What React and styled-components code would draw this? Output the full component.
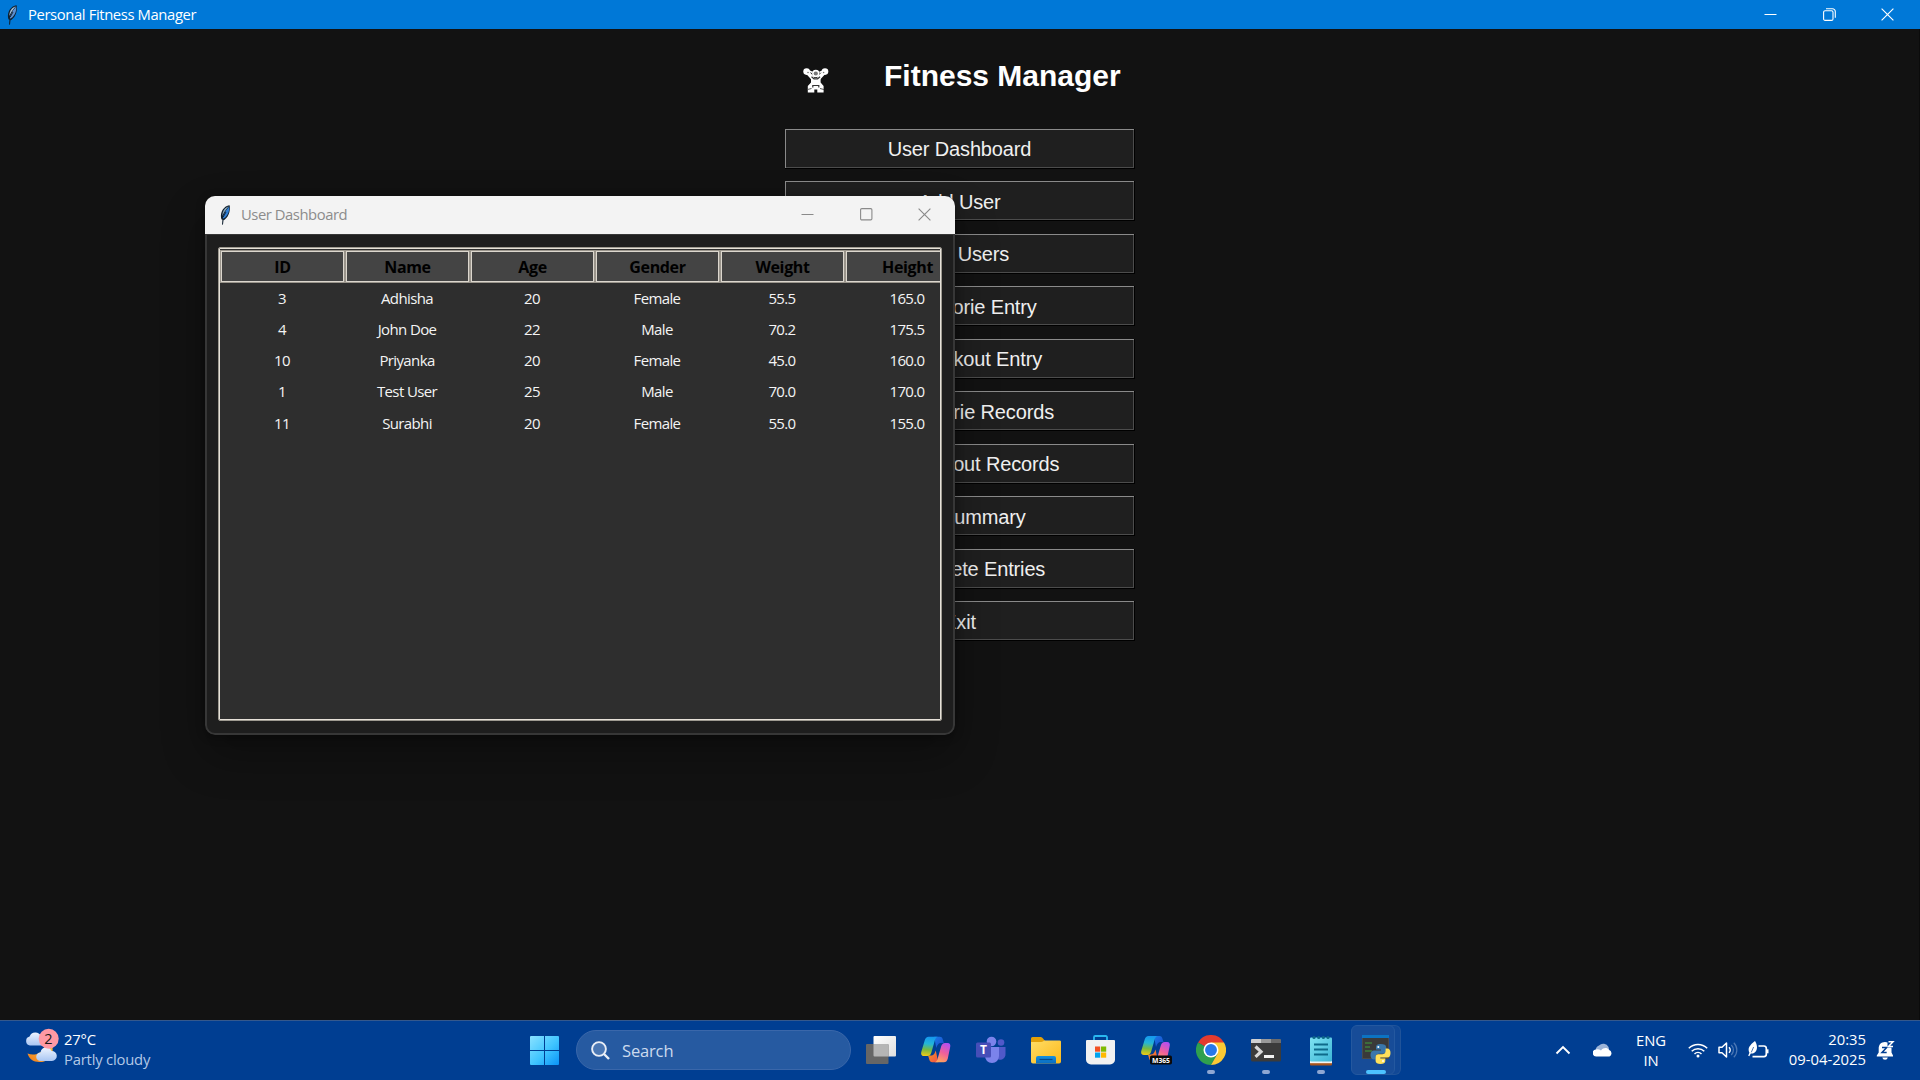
import React from "react";
import styled, { createGlobalStyle } from "styled-components";

const GlobalStyle = createGlobalStyle`
  * { box-sizing: border-box; }
  html, body { margin: 0; padding: 0; background: #121212; overflow: hidden; }
`;

const ui = `"Open Sans", "Noto Sans", sans-serif`;
const arial = `"Liberation Sans", Arial, sans-serif`;

const Screen = styled.div`
  width: 1920px;
  height: 1080px;
  display: flex;
  flex-direction: column;
  position: relative;
  overflow: hidden;
  background: #121212;
  font-family: ${ui};
`;

const TitleBar = styled.header`
  display: flex;
  align-items: center;
  flex: none;
  height: ${(p) => p.$height}px;
  padding-left: ${(p) => p.$pad}px;
  background: ${(p) => p.$bg};
  color: ${(p) => p.$color};
`;

const TitleText = styled.span`
  flex: 1;
  margin-left: ${(p) => p.$gap}px;
  padding-bottom: 2px;
  font-size: 14.8px;
  line-height: 20px;
  letter-spacing: ${(p) => p.$ls}px;
  white-space: nowrap;
`;

const Controls = styled.div`
  display: grid;
  grid-template-columns: repeat(3, 58.5px);
  justify-items: center;
  color: ${(p) => p.$color};
  margin-right: ${(p) => p.$right}px;
  padding-bottom: 1px;
  svg { display: block; }
`;

const Main = styled.main`
  flex: 1;
  display: flex;
  flex-direction: column;
  align-items: center;
  padding-top: 27px;
  box-shadow: inset -1px 0 #0b0b0b;
`;

const Heading = styled.div`
  display: flex;
  align-items: flex-start;
  width: 350px;
  height: 72.9px;
  padding-left: 18px;
`;

const HeadIcon = styled.div`
  width: 27px;
  padding-top: 11px;
  svg { display: block; }
`;

const HeadTitle = styled.h1`
  margin: 2px 0 0 54px;
  font: bold 30px/36px ${arial};
  color: #fff;
  white-space: nowrap;
`;

const Menu = styled.nav`
  display: flex;
  flex-direction: column;
  gap: 12.5px;
`;

const MenuButton = styled.button`
  display: flex;
  align-items: center;
  justify-content: center;
  width: 350px;
  height: 40px;
  padding: 1px 1px 0 0;
  border: 0;
  background: #1f1f1f;
  color: #f0f0f0;
  font: 20px/24px ${arial};
  letter-spacing: -0.14px;
  box-shadow: inset -1px -1px #000, inset 1px 1px #8a8a8a, inset -2px -2px #4c4c4c;
`;

const Dialog = styled.section`
  position: absolute;
  left: 205px;
  top: 196px;
  width: 750px;
  height: 539px;
  display: flex;
  flex-direction: column;
  border-radius: 10px;
  overflow: hidden;
  background: #1e1e1e;
  box-shadow: 0 20px 44px rgba(0, 0, 0, 0.3), 0 2px 10px rgba(0, 0, 0, 0.3);
`;

const DialogBody = styled.div`
  flex: 1;
  padding: 12px 11px 12px;
  border: 2px solid #373737;
  border-top: 1px solid #373737;
  border-radius: 0 0 10px 10px;
`;

const Tree = styled.div`
  height: 100%;
  overflow: hidden;
  background: #2e2e2e;
  border: 1px solid #9e9a91;
  box-shadow: inset 0 0 0 1px #e6e1d8;
  border-radius: 2px;
  padding: 2px 1px;
`;

const TreeRow = styled.div`
  display: grid;
  grid-template-columns: repeat(6, 125px);
  width: 720px;
  overflow: hidden;
`;

const HeaderCell = styled.div`
  height: 33px;
  display: flex;
  align-items: center;
  justify-content: center;
  background: #444;
  color: #000;
  font-size: 16px;
  font-weight: 700;
  letter-spacing: -0.35px;
  border: 1px solid #9a958c;
  box-shadow: inset 0 0 0 1px #dcd7ce;
`;

const Cell = styled.div`
  height: 31.25px;
  display: flex;
  align-items: center;
  justify-content: center;
  padding: 0 1px 2px 0;
  color: #f4f4f4;
  font-size: 15px;
  letter-spacing: -0.62px;
`;

const Taskbar = styled.footer`
  flex: none;
  height: 60px;
  display: flex;
  align-items: center;
  background: #003e92;
  border-top: 1px solid #35588c;
  color: #fff;
`;

const Weather = styled.div`
  width: 517px;
  display: flex;
  align-items: center;
  padding-left: 24px;
  svg { display: block; overflow: visible; }
`;

const Lines = styled.div`
  display: flex;
  flex-direction: column;
  align-items: ${(p) => p.$align || "flex-start"};
  width: ${(p) => p.$w}px;
  margin-left: ${(p) => p.$ml || 0}px;
  margin-right: ${(p) => p.$mr || 0}px;
  padding-bottom: ${(p) => p.$lift || 0}px;
  font-size: 14.8px;
  line-height: 20px;
  letter-spacing: ${(p) => p.$ls || 0}px;
  white-space: nowrap;
`;

const Muted = styled.span`
  color: #b3c8e6;
`;

const Slot = styled.div`
  width: 55px;
  height: 59px;
  padding-bottom: 1px;
  display: flex;
  align-items: center;
  justify-content: center;
  position: relative;
  svg { display: block; }
`;

const Search = styled.div`
  width: 275px;
  height: 40px;
  margin: 0 2.5px 1px 4px;
  display: flex;
  align-items: center;
  padding-left: 14px;
  gap: 12px;
  border-radius: 20px;
  border: 1px solid #3a67aa;
  background: #265aa1;
  color: #ccdaee;
  font-size: 16.5px;
  letter-spacing: -0.15px;
  svg { display: block; }
`;

const Indicator = styled.i`
  position: absolute;
  bottom: 6px;
  left: 50%;
  width: ${(p) => (p.$active ? 20 : 8)}px;
  height: 4px;
  margin-left: ${(p) => (p.$active ? -10 : -4)}px;
  border-radius: 2px;
  background: ${(p) => (p.$active ? "#4cc2ff" : "#8ea7d3")};
`;

const ActiveTile = styled.div`
  width: 44px;
  height: 50px;
  margin-right: 6px;
  padding-left: 8px;
  display: flex;
  align-items: center;
  justify-content: center;
  border-radius: 6px;
  background: #174c98;
  border: 1px solid #24589f;
  box-shadow: 6px 0 0 -1px #114896, 6px 0 0 0 #205399;
`;

const Tray = styled.div`
  margin-left: auto;
  padding-right: 15px;
  display: flex;
  align-items: center;
  height: 59px;
  svg { display: block; }
`;

const TrayItem = styled.div`
  width: ${(p) => p.$w}px;
  display: flex;
  justify-content: center;
  padding-bottom: 1px;
`;

const Feather = ({ light }) => (
  <svg width="14" height="22" viewBox="0 0 14 22">
    <path d="M11.600 1.200C8 1.500 4.800 4.500 3.600 8 2.900 10 2.600 12.500 3.400 15.300l1 .4L4 20.800l1-.2.5-4.300C8.500 15 11 11 11.600 7c.4-2.200.4-4.400 0-5.800z" fill="#10202f" />
    <path d="M10.800 2.300C8 3 5.500 5.700 4.700 8.700L4.200 12l2.300-4.200 3.200-4.300z" fill={light ? "#8ba6b8" : "#a9c4dc"} />
    <path d="M11.200 2.600L8 6.600 5 12.500l.2 2.300C8.600 13 10.600 9.500 11 6.500c.2-1.500.3-2.900.2-3.900z" fill={light ? "#2f7fd6" : "#5b8fd0"} />
    <path d="M8 8L5.200 13" stroke="#0c1520" strokeWidth="0.800" />
  </svg>
);

const Min = () => (
  <svg width="13" height="13" viewBox="0 0 13 13"><path d="M0.500 6.500h12" stroke="currentColor" strokeWidth="1" /></svg>
);
const Max = () => (
  <svg width="13" height="13" viewBox="0 0 13 13" fill="none" stroke="currentColor"><rect x="0.600" y="0.600" width="11.300" height="11.300" rx="1.200" strokeWidth="1.100" /></svg>
);
const Restore = () => (
  <svg width="13" height="13" viewBox="0 0 13 13" fill="none" stroke="currentColor" strokeWidth="1.100">
    <rect x="0.600" y="2.800" width="9.400" height="9.600" rx="1.500" />
    <path d="M3 .8h6.500a2.800 2.800 0 0 1 2.800 2.800V9.800" />
  </svg>
);
const Close = () => (
  <svg width="13" height="13" viewBox="0 0 13 13"><path d="M.6.6l11.800 11.800M12.400.6L.6 12.400" stroke="currentColor" strokeWidth="1.150" /></svg>
);

const Lifter = () => (
  <svg width="26" height="27" viewBox="0 0 26 27">
    <g fill="#fff">
      <circle cx="3.600" cy="4.600" r="3.300" />
      <circle cx="22" cy="4.600" r="3.300" />
      <path d="M4.500 5.500l5.500 6M21 5.500l-5.500 6" stroke="#fff" strokeWidth="4" />
      <path d="M5 3.500l4.500 2M21 3.500l-4.500 2" stroke="#fff" strokeWidth="1.600" />
      <circle cx="12.800" cy="6.500" r="3.700" />
      <path d="M8 11h9.600v4.500l3 3.500v6.500h-6.300v-3h-3v3H4.800V19l3.200-3.500z" />
    </g>
    <circle cx="12.800" cy="6.500" r="2.100" fill="#777" />
    <path d="M8.500 9.800l2.500 2h3.600l2.500-2M9.800 20.500v-2h6v2" stroke="#333" strokeWidth="1.200" fill="none" />
    <path d="M4.500 22.500l4-1M21 22.500l-4-1" stroke="#444" strokeWidth=".9" />
    <circle cx="5" cy="5.500" r=".8" fill="#777" /><circle cx="20.600" cy="5.500" r=".8" fill="#777" />
  </svg>
);

const WeatherIcon = () => (
  <svg width="38" height="38" viewBox="0 0 38 38">
    <defs>
      <linearGradient id="cl" x1="0" y1="0" x2="0" y2="1"><stop offset="0" stopColor="#eef4ff" /><stop offset="1" stopColor="#a9c6f3" /></linearGradient>
      <linearGradient id="mn" x1="0" y1="1" x2="1" y2="0"><stop offset="0" stopColor="#f07c1c" /><stop offset="1" stopColor="#ffc83d" /></linearGradient>
    </defs>
    <path d="M6 13.500a4.600 4.600 0 0 1-.4-9A6.200 6.200 0 0 1 17 4l4 9.500z" fill="url(#cl)" />
    <path d="M3.500 21.500c7 3 16 0 18-10l6 1c4 9-3 18-12 17.500C9 30 5 26.500 3.500 21.500z" fill="url(#mn)" />
    <path d="M16.500 29a4.300 4.300 0 0 1 0-8.600 5.800 5.800 0 0 1 11-1.500 5 5 0 0 1 .5 10.100z" fill="url(#cl)" />
    <circle cx="24.700" cy="6.700" r="10" fill="#ff99a4" />
    <text x="24.500" y="11.700" textAnchor="middle" fontFamily="Open Sans, sans-serif" fontSize="14.500" fill="#1a1a1a">2</text>
  </svg>
);

const StartIcon = () => (
  <svg width="29" height="29" viewBox="0 0 29 29">
    <defs><linearGradient id="st" gradientUnits="userSpaceOnUse" x1="0" y1="0" x2="29" y2="29"><stop offset="0" stopColor="#8ae2ff" /><stop offset=".55" stopColor="#3fc4ff" /><stop offset="1" stopColor="#0a93f7" /></linearGradient></defs>
    <path fill="url(#st)" d="M1 0h13v14H0V1a1 1 0 0 1 1-1zM15 0h13a1 1 0 0 1 1 1v13H15zM0 15h14v14H1a1 1 0 0 1-1-1zM15 15h14v13a1 1 0 0 1-1 1H15z" />
  </svg>
);

const SearchIcon = () => (
  <svg width="19" height="19" viewBox="0 0 19 19" fill="none" stroke="#e9eef6"><circle cx="8" cy="8" r="6.900" strokeWidth="1.900" fill="#4a77b4" /><path d="M13 13l5 5" strokeWidth="2.400" /></svg>
);

const TaskViewIcon = () => (
  <svg width="30" height="28" viewBox="0 0 30 28">
    <defs><linearGradient id="tv" x1="0" y1="0" x2="1" y2="1"><stop offset="0" stopColor="#fff" /><stop offset="1" stopColor="#dedede" /></linearGradient></defs>
    <rect x="7.500" y="0" width="22.500" height="20.500" rx="1" fill="url(#tv)" />
    <rect x="0" y="8" width="22.500" height="20" rx="1" fill="#666" />
    <path d="M7.500 8h14a1 1 0 0 1 1 1v11.500h-14a1 1 0 0 1-1-1z" fill="#b5b5b5" />
  </svg>
);

const CopilotShape = ({ id }) => (
  <>
    <defs>
      <linearGradient id={id + "a"} x1=".3" y1="0" x2=".2" y2="1"><stop offset="0" stopColor="#1698ee" /><stop offset=".35" stopColor="#23b5d8" /><stop offset=".65" stopColor="#76b943" /><stop offset="1" stopColor="#f4cc14" /></linearGradient>
      <linearGradient id={id + "b"} x1=".7" y1="0" x2=".3" y2="1"><stop offset="0" stopColor="#b44ff0" /><stop offset=".5" stopColor="#f0609a" /><stop offset="1" stopColor="#ffa75a" /></linearGradient>
      <linearGradient id={id + "c"} x1="0" y1="0" x2="1" y2="1"><stop offset="0" stopColor="#1a7be8" /><stop offset="1" stopColor="#1b45c8" /></linearGradient>
      <linearGradient id={id + "d"} x1="0" y1="0" x2="1" y2="1"><stop offset="0" stopColor="#f59a1a" /><stop offset="1" stopColor="#f04e4e" /></linearGradient>
    </defs>
    <path d="M13 1h5.500c1.500 0 2.300.8 2.800 2.300L22.500 7H20c-3 0-4 2-5 5z" fill={`url(#${id}c)`} />
    <path d="M17 26h-6c-1.500 0-2.300-.8-2.800-2.300L7 19.500h2.500c3 0 4-2 5-5z" fill={`url(#${id}d)`} />
    <path d="M7.500 1h9c-1.800.5-2.500 2-3 4l-3.300 11.500c-.7 2.300-1.800 3.500-4 3.500H3c-2.500 0-3.400-2-2.600-4.500L3.700 4.500C4.400 2.200 5.500 1 7.500 1z" fill={`url(#${id}a)`} />
    <path d="M22.500 26h-9c1.800-.5 2.500-2 3-4l3.300-11.500c.7-2.300 1.800-3.500 4-3.500H26c2.500 0 3.400 2 2.600 4.500l-2.300 11c-.7 2.300-1.800 3.500-3.800 3.500z" fill={`url(#${id}b)`} />
  </>
);

const CopilotIcon = () => (
  <svg width="30" height="30" viewBox="0 -.5 29.500 29"><CopilotShape id="cp" /></svg>
);

const M365Icon = () => (
  <svg width="31" height="30" viewBox="0 0 31 30">
    <CopilotShape id="m3" />
    <rect x="9" y="20.500" width="22" height="9" rx="1.800" fill="#0a0a0a" />
    <text x="20" y="28" textAnchor="middle" fontFamily="Open Sans, sans-serif" fontWeight="700" fontSize="7.800" textLength="18" lengthAdjust="spacingAndGlyphs" fill="#fff">M365</text>
  </svg>
);

const TeamsIcon = () => (
  <svg width="30" height="28" viewBox="0 0 30 28">
    <circle cx="25" cy="6.500" r="3.300" fill="#5059c9" />
    <path d="M19 11h10.500v7a5.500 5.500 0 0 1-9 4.500z" fill="#5059c9" />
    <circle cx="15.500" cy="5.500" r="4.800" fill="#7b83eb" />
    <path d="M9 11h14v8.500c0 4.500-3 7.500-7 7.500s-7-3-7-7.500z" fill="#7b83eb" />
    <rect x="0" y="6.500" width="15" height="15" rx="1.500" fill="#464eb8" />
    <text x="7.500" y="18.200" textAnchor="middle" fontFamily="Open Sans, sans-serif" fontWeight="700" fontSize="12" fill="#fff">T</text>
  </svg>
);

const FolderIcon = () => (
  <svg width="30" height="27" viewBox="0 0 30 27">
    <defs>
      <linearGradient id="fo" x1="0" y1="0" x2="1" y2="1"><stop offset="0" stopColor="#ffdd66" /><stop offset="1" stopColor="#fbb91a" /></linearGradient>
      <linearGradient id="fb" x1="0" y1="0" x2="0" y2="1"><stop offset="0" stopColor="#1490df" /><stop offset="1" stopColor="#0a6cc0" /></linearGradient>
    </defs>
    <path d="M0 10V1.500A1.500 1.500 0 0 1 1.500 0h8c1 0 1.500.5 2.500 1.500L14 4z" fill="#e3a008" />
    <path d="M0 5h9.500c1.200 0 2-.3 3-1l.8-.6h15.200A1.500 1.500 0 0 1 30 5v19.500a2 2 0 0 1-2 2H2a2 2 0 0 1-2-2z" fill="url(#fo)" />
    <path d="M5 26.500V21a2 2 0 0 1 2-2h16a2 2 0 0 1 2 2v5.500z" fill="url(#fb)" />
    <path d="M8.500 22.500h13" stroke="#064a8c" strokeWidth="1.200" />
  </svg>
);

const StoreIcon = () => (
  <svg width="30" height="30" viewBox="0 0 30 30">
    <path d="M8 6V2.200A1.200 1.200 0 0 1 9.200 1h10.600A1.200 1.200 0 0 1 21 2.200V6" fill="none" stroke="#29b8f0" strokeWidth="1.800" />
    <path d="M0 6a1 1 0 0 1 1-1h27a1 1 0 0 1 1 1v18.500a5 5 0 0 1-5 5H5a5 5 0 0 1-5-5z" fill="#f1f1f1" />
    <rect x="9" y="11.500" width="5.200" height="5.200" fill="#f25022" /><rect x="15" y="11.500" width="5.200" height="5.200" fill="#7fba00" />
    <rect x="9" y="17.500" width="5.200" height="5.200" fill="#00a4ef" /><rect x="15" y="17.500" width="5.200" height="5.200" fill="#ffb900" />
  </svg>
);

const ChromeIcon = () => (
  <svg width="30" height="30" viewBox="0 0 48 48">
    <path d="M24 24L3.200 12A24 24 0 0 1 44.800 12z" fill="#e33b2e" />
    <path d="M24 24L3.200 12A24 24 0 0 0 24 48L34.400 30z" fill="#2fa04e" />
    <path d="M24 12h20.800A24 24 0 0 1 24 48l10.400-18z" fill="#fcc934" />
    <circle cx="24" cy="24" r="12" fill="#fff" />
    <circle cx="24" cy="24" r="9.500" fill="#2878ea" />
  </svg>
);

const TerminalIcon = () => (
  <svg width="30" height="23" viewBox="0 0 30 23">
    <path d="M0 4h30v17a1.500 1.500 0 0 1-1.500 1.500h-27A1.500 1.500 0 0 1 0 21z" fill="#3b3b3b" />
    <path d="M1 0h9v4H0V1a1 1 0 0 1 1-1z" fill="#d0d0d0" /><path d="M10 0h10v4H10z" fill="#999" /><path d="M20 0h9a1 1 0 0 1 1 1v3H20z" fill="#6b6b6b" />
    <path d="M4.500 7.500l5.500 5.200-5.500 5.200" fill="none" stroke="#d8d8d8" strokeWidth="3.200" />
    <path d="M13 17.500h10" stroke="#f2f2f2" strokeWidth="3" />
  </svg>
);

const NotepadIcon = () => (
  <svg width="22" height="31" viewBox="0 0 22 31">
    <defs><linearGradient id="np" x1="0" y1="0" x2="1" y2="1"><stop offset="0" stopColor="#7fe3f2" /><stop offset="1" stopColor="#3db5d6" /></linearGradient></defs>
    <rect x="0" y="24" width="22" height="6.500" rx="1" fill="#a8541c" />
    <rect x="0" y="24" width="22" height="4.200" fill="#f3f3f3" />
    <rect x="0" y="2.500" width="22" height="24" rx="1" fill="url(#np)" />
    <g fill="#0e6a8a"><circle cx="4" cy="2.500" r="1.600" /><circle cx="8.700" cy="2.500" r="1.600" /><circle cx="13.400" cy="2.500" r="1.600" /><circle cx="18" cy="2.500" r="1.600" /></g>
    <path d="M4 9.500h14M4 14.500h14M4 19.500h14" stroke="#0e6a8a" strokeWidth="1.900" />
  </svg>
);

const PythonIcon = () => (
  <svg width="30" height="30" viewBox="0 0 30 30">
    <rect x="0" y="0" width="27" height="24" fill="#4a4a4a" />
    <rect x="1" y="3" width="25" height="20" fill="#3a3a3a" />
    <path d="M0 0h27v3H0z" fill="#0c73c2" />
    <path d="M3 8h7M3 12h5M3 16h7" stroke="#3f7f3c" strokeWidth="1.300" />
    <path d="M18.500 9c-3 0-4.500 1-4.500 3v2.500h5v1h-7c-2 0-3.500 1.500-3.500 4.500s1.500 4.500 3.500 4.500h1.700v-2.500c0-2 1.500-3.300 3.300-3.300h4.500c1.700 0 2.700-1.200 2.700-2.700v-4c0-2-2-3-5.700-3z" fill="#3a77ab" />
    <path d="M18.500 29c3 0 4.800-1 4.800-3v-2.500h-5v-1h7c2 0 3.200-1.500 3.200-4.500s-1.200-4.500-3.200-4.500H23.600V16c0 2-1.500 3.300-3.300 3.300h-4c-1.700 0-2.700 1.200-2.700 2.700v4c0 2 1.900 3 4.900 3z" fill="#ffe05a" />
    <circle cx="16.300" cy="12" r="1" fill="#fff" /><circle cx="21" cy="26" r="1" fill="#fff" />
  </svg>
);

const Chevron = () => (
  <svg width="16" height="10" viewBox="0 0 16 10"><path d="M1.500 8.500L8 2l6.500 6.500" fill="none" stroke="#fff" strokeWidth="1.900" /></svg>
);

const OneDrive = () => (
  <svg width="20" height="14" viewBox="0 0 20 14">
    <path d="M3 9a5 5 0 0 1 3-6.500A6 6 0 0 1 15.500 4l1 4z" fill="#9cb4d8" />
    <path d="M3.500 13.500a3.500 3.500 0 0 1-.5-7c2-.5 3.500 0 5 1 2.500-3 6-3.200 8-.5A3.500 3.500 0 0 1 16.500 13.500z" fill="#fff" />
  </svg>
);

const Wifi = () => (
  <svg width="20" height="16" viewBox="0 0 20 16" fill="none" stroke="#fff" strokeWidth="1.500">
    <path d="M.8 6.200a13 13 0 0 1 18.400 0M3.700 9.200a9 9 0 0 1 12.600 0M6.500 12a5 5 0 0 1 7 0" /><circle cx="10" cy="14" r="1.500" fill="#fff" stroke="none" />
  </svg>
);

const Volume = () => (
  <svg width="20" height="18" viewBox="0 0 20 18" fill="none" stroke="#fff" strokeWidth="1.500">
    <path d="M1 6.300h3L8.500 2v14L4 11.700H1z" strokeLinejoin="round" /><path d="M11 6.200a4 4 0 0 1 0 5.600" />
    <path d="M13.300 4a7 7 0 0 1 0 10M15.800 1.700a10.300 10.300 0 0 1 0 14.600" stroke="#4c78b5" strokeWidth="1.200" />
  </svg>
);

const Battery = () => (
  <svg width="21" height="18" viewBox="0 0 21 18">
    <path d="M10.500 5h5.500a2.300 2.300 0 0 1 2.300 2.300v6a2.300 2.300 0 0 1-2.300 2.300H4.500" fill="none" stroke="#fff" strokeWidth="1.700" />
    <path d="M18.500 8.300h2v4h-2z" fill="#fff" />
    <path d="M7 0c2.300 3.500 3 8.500 0 11.300-1.400 1.400-3.200 1.400-4.200 1.100L1.300 15.300.2 14.800l1.200-3C-1 7 2.500 3.500 7 0z" fill="#fff" />
    <path d="M5.600 6L3.300 11.300" stroke="#003e92" strokeWidth=".7" />
  </svg>
);

const Bell = () => (
  <svg width="19" height="21" viewBox="0 0 19 21">
    <path d="M9 2c-4 0-6.300 2.800-6.300 6.500v4L.8 15.500v1h16.200v-1l-1.500-3V8.500C15.500 4.800 13 2 9 2z" fill="#fff" />
    <path d="M6.300 17.500h5.500a2.800 2.800 0 0 1-5.500 0z" fill="#fff" />
    <path d="M11.500 0H18v7.500h-6.500z" fill="#003e92" />
    <path d="M6 7.500h4.700L6 12.500h4.700" fill="none" stroke="#003e92" strokeWidth="1.500" />
    <path d="M12.500 1.700H17l-4.500 4.800H17" fill="none" stroke="#fff" strokeWidth="1.500" />
  </svg>
);

const menu = [
  "User Dashboard", "Add User", "View Users", "Add Calorie Entry", "Add Workout Entry",
  "View Calorie Records", "View Workout Records", "View Summary", "View/Delete Entries", "Exit",
];
const columns = ["ID", "Name", "Age", "Gender", "Weight", "Height"];
const users = [
  ["3", "Adhisha", "20", "Female", "55.5", "165.0"],
  ["4", "John Doe", "22", "Male", "70.2", "175.5"],
  ["10", "Priyanka", "20", "Female", "45.0", "160.0"],
  ["1", "Test User", "25", "Male", "70.0", "170.0"],
  ["11", "Surabhi", "20", "Female", "55.0", "155.0"],
];
const apps = [
  { icon: TaskViewIcon }, { icon: CopilotIcon }, { icon: TeamsIcon }, { icon: FolderIcon }, { icon: StoreIcon },
  { icon: M365Icon }, { icon: ChromeIcon, open: true }, { icon: TerminalIcon, open: true }, { icon: NotepadIcon, open: true },
];

export default function App() {
  return (
    <Screen>
      <GlobalStyle />
      <TitleBar $height={29} $pad={5} $bg="#0078d7" $color="#fff">
        <Feather />
        <TitleText $gap={9} $ls={-0.38}>Personal Fitness Manager</TitleText>
        <Controls $color="#fff" $right={3}><Min /><Restore /><Close /></Controls>
      </TitleBar>
      <Main>
        <Heading>
          <HeadIcon><Lifter /></HeadIcon>
          <HeadTitle>Fitness Manager</HeadTitle>
        </Heading>
        <Menu>
          {menu.map((label) => <MenuButton key={label}>{label}</MenuButton>)}
        </Menu>
      </Main>
      <Taskbar>
        <Weather>
          <WeatherIcon />
          <Lines $w={100} $ml={2} $lift={4} $ls={-0.2}><span>27°C</span><Muted>Partly cloudy</Muted></Lines>
        </Weather>
        <Slot><StartIcon /></Slot>
        <Search><SearchIcon />Search</Search>
        {apps.map(({ icon: Icon, open }, i) => (
          <Slot key={i}><Icon />{open && <Indicator />}</Slot>
        ))}
        <Slot>
          <ActiveTile><PythonIcon /></ActiveTile>
          <Indicator $active />
        </Slot>
        <Tray>
          <TrayItem $w={40}><Chevron /></TrayItem>
          <TrayItem $w={40}><OneDrive /></TrayItem>
          <Lines $w={60} $align="center" $ml={-2} $mr={2} $lift={2} $ls={-0.1}><span>ENG</span><span>IN</span></Lines>
          <TrayItem $w={30}><Wifi /></TrayItem>
          <TrayItem $w={30}><Volume /></TrayItem>
          <TrayItem $w={30}><Battery /></TrayItem>
          <Lines $w={93} $align="flex-end" $lift={4} $ls={0}><span>20:35</span><span>09-04-2025</span></Lines>
          <TrayItem $w={39}><Bell /></TrayItem>
        </Tray>
      </Taskbar>
      <Dialog>
        <TitleBar $height={38} $pad={13} $bg="#f3f3f3" $color="#8c8c8c">
          <Feather light />
          <TitleText $gap={9} $ls={-0.45}>User Dashboard</TitleText>
          <Controls $color="#8a8a8a" $right={1}><Min /><Max /><Close /></Controls>
        </TitleBar>
        <DialogBody>
          <Tree>
            <TreeRow>{columns.map((c) => <HeaderCell key={c}>{c}</HeaderCell>)}</TreeRow>
            {users.map((u) => (
              <TreeRow key={u[0]}>{u.map((v, i) => <Cell key={i}>{v}</Cell>)}</TreeRow>
            ))}
          </Tree>
        </DialogBody>
      </Dialog>
    </Screen>
  );
}
